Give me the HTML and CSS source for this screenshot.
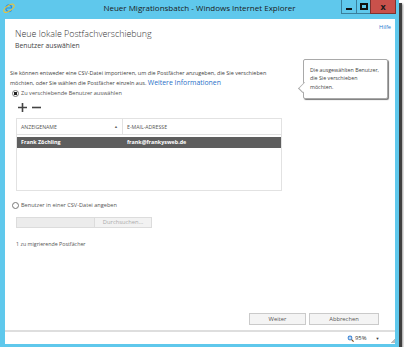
FILE: index.html
```html
<!DOCTYPE html>
<html lang="de">
<head>
    <meta charset="UTF-8">
    <title>Neuer Migrationsbatch</title>
    <link rel="stylesheet" href="styles.css">
</head>
<body>
    <div class="window">
        <div class="titlebar">
            <svg class="ie-logo" width="12" height="12" viewBox="0 0 12 12">
                <path d="M9.2 6.6H3.4c.1 1.5 1.2 2.4 2.6 2.4.9 0 1.6-.4 2.1-1l1 .6C8.3 9.6 7.2 10.2 6 10.2 3.8 10.2 2.2 8.5 2.2 6.3S3.8 2.3 6 2.3s3.3 1.7 3.3 3.8v.5zM3.5 5.5h4.5C7.8 4.3 7 3.5 5.9 3.5S4 4.3 3.5 5.5z" fill="#2b8fe0"/>
                <ellipse cx="6" cy="6.2" rx="6" ry="2.6" transform="rotate(-35 6 6.2)" fill="none" stroke="#f2c12e" stroke-width="1"/>
            </svg>
            <div class="title">Neuer Migrationsbatch - Windows Internet Explorer</div>
            <div class="controls">
                <div class="ctl ctl-min"><span></span></div>
                <div class="ctl ctl-max"><span></span></div>
                <div class="ctl ctl-close">x</div>
            </div>
        </div>
        <div class="client">
            <div class="page">
                <div class="head">
                    <div class="titles">
                        <h1>Neue lokale Postfachverschiebung</h1>
                        <h2>Benutzer auswählen</h2>
                    </div>
                    <a class="help" href="#">Hilfe</a>
                </div>
                <p class="intro">Sie können entweder eine CSV-Datei importieren, um die Postfächer anzugeben, die Sie verschieben<br>möchten, oder Sie wählen die Postfächer einzeln aus. <a href="#">Weitere Informationen</a></p>
                <div class="option"><span class="radio checked"></span>Zu verschiebende Benutzer auswählen</div>
                <div class="tools">
                    <svg width="9" height="9" viewBox="0 0 9 9"><path d="M4.5 0v9M0 4.5h9" stroke="#444" stroke-width="1.6"/></svg>
                    <svg width="9" height="9" viewBox="0 0 9 9"><path d="M0 4.5h9" stroke="#444" stroke-width="1.6"/></svg>
                </div>
                <div class="grid">
                    <div class="grid-head">
                        <div class="cell cell-name">ANZEIGENAME<span class="sort">&#9650;</span></div>
                        <div class="cell">E-MAIL-ADRESSE</div>
                    </div>
                    <div class="grid-body">
                        <div class="grid-row selected">
                            <div class="cell cell-name">Frank Zöchling</div>
                            <div class="cell">frank@frankysweb.de</div>
                        </div>
                    </div>
                </div>
                <div class="option option-csv"><span class="radio"></span>Benutzer in einer CSV-Datei angeben</div>
                <div class="file">
                    <div class="file-input"></div>
                    <div class="file-btn">Durchsuchen...</div>
                </div>
                <p class="count">1 zu migrierende Postfächer</p>
                <div class="actions">
                    <button class="btn btn-next">Weiter</button>
                    <button class="btn btn-cancel">Abbrechen</button>
                </div>
                <div class="callout">Die ausgewählten Benutzer,<br>die Sie verschieben<br>möchten.</div>
            </div>
            <div class="statusbar">
                <svg class="zoom-icon" width="7" height="7" viewBox="0 0 7 7">
                    <circle cx="3" cy="3" r="2.4" fill="#3d86d6"/>
                    <path d="M3 1.6v2.8M1.6 3h2.8" stroke="#fff" stroke-width="0.9"/>
                    <path d="M4.6 4.6L6.6 6.6" stroke="#7a4a1c" stroke-width="1.2"/>
                </svg>
                <span class="zoom-level">95%</span>
                <span class="zoom-arrow">&#9660;</span>
                <span class="grip"></span>
            </div>
        </div>
    </div>
</body>
</html>
```
FILE: styles.css
```css
body {
    margin: 0;
    background-color: #fff;
    font-family: 'Open Sans', 'Noto Sans', sans-serif;
    color: #444;
}
.window {
    display: flex;
    flex-direction: column;
    width: 399px;
    height: 347px;
    background-color: #5fc8ec;
    box-shadow: 3px 3px 0 #3f3f3f, 4px 4px 2px #9a9a9a;
}
.titlebar {
    display: grid;
    grid-template-columns: 1fr auto 1fr;
    align-items: start;
    height: 19px;
}
.ie-logo {
    margin: 2px 0 0 3px;
}
.title {
    font-size: 8px;
    line-height: 16px;
    color: #1b1b1b;
}
.controls {
    display: flex;
    justify-self: end;
    margin-right: 3px;
}
.ctl {
    display: flex;
    align-items: center;
    justify-content: center;
    height: 13px;
    border: 1px solid #3a7f9c;
    border-top: 0;
    box-sizing: content-box;
}
.ctl-min {
    width: 14px;
    border-right: 0;
}
.ctl-min span {
    width: 6px;
    height: 2px;
    margin-top: 4px;
    background-color: #111;
}
.ctl-max {
    width: 13px;
    border-right: 0;
}
.ctl-max span {
    width: 4px;
    height: 3px;
    border: 2px solid #111;
}
.ctl-close {
    width: 24px;
    background-color: #c9514b;
    border-color: #7d3330;
    color: #1a1a1a;
    font-size: 9px;
    font-weight: bold;
    line-height: 13px;
}
.client {
    display: flex;
    flex-direction: column;
    flex: 1;
    margin: 0 4px 3px 5px;
    background-color: #fff;
}
.page {
    position: relative;
    display: flex;
    flex-direction: column;
    flex: 1;
    padding-bottom: 5px;
}
.head {
    display: flex;
    justify-content: space-between;
    align-items: flex-start;
}
.titles {
    padding: 8px 0 0 10px;
}
h1 {
    margin: 0;
    font-size: 8.9px;
    font-weight: 300;
    line-height: 14px;
    color: #333;
}
h2 {
    margin: 0;
    font-size: 6.8px;
    font-weight: normal;
    line-height: 10px;
    color: #444;
}
.help {
    margin: 3px 4px 0 0;
    font-size: 5.6px;
    line-height: 10px;
    color: #1f78cf;
    text-decoration: none;
}
.intro {
    margin: 18px 0 0 5px;
    font-size: 5.5px;
    line-height: 9px;
    color: #444;
}
.intro a {
    font-size: 6.9px;
    color: #1f70c7;
    text-decoration: none;
}
.option {
    display: flex;
    align-items: center;
    margin: 1px 0 0 7px;
    font-size: 5.6px;
    line-height: 9px;
    color: #555;
}
.radio {
    width: 5px;
    height: 5px;
    margin-right: 2px;
    border: 0.8px solid #777;
    border-radius: 50%;
    box-sizing: content-box;
    background-color: #fff;
}
.radio.checked {
    background: radial-gradient(circle, #222 0, #222 1.6px, #fff 2px);
}
.tools {
    display: flex;
    gap: 5px;
    height: 10px;
    align-items: center;
    margin: 4px 0 0 13px;
}
.grid {
    width: 266px;
    height: 73px;
    margin: 6px 0 0 11px;
    box-sizing: border-box;
    border: 1px solid #e2e2e2;
}
.grid-head {
    display: flex;
    height: 16px;
    border-bottom: 1px solid #e2e2e2;
    box-sizing: border-box;
    font-size: 5.2px;
    color: #555;
}
.grid-head .cell {
    display: flex;
    align-items: center;
}
.cell {
    padding-left: 4px;
    flex: 1;
}
.cell-name {
    flex: 0 0 106px;
    box-sizing: border-box;
    padding-right: 4px;
}
.grid-head .cell-name {
    border-right: 1px solid #e2e2e2;
}
.sort {
    margin-left: auto;
    font-size: 4px;
    color: #666;
}
.grid-body {
    padding-top: 2px;
}
.grid-row {
    display: flex;
    height: 11px;
    line-height: 11px;
    font-size: 5.4px;
    font-weight: bold;
}
.grid-row.selected {
    background-color: #5e5e5e;
    color: #fff;
}
.option-csv {
    margin-top: 10px;
}
.file {
    display: flex;
    margin: 7px 0 0 11px;
    height: 11px;
}
.file-input {
    width: 79px;
    background-color: #ececec;
    border: 1px solid #dcdcdc;
    box-sizing: border-box;
}
.file-btn {
    width: 57px;
    background-color: #f2f2f2;
    border: 1px solid #dcdcdc;
    border-left: 0;
    box-sizing: border-box;
    font-size: 5.8px;
    line-height: 9px;
    text-align: center;
    color: #aaa;
}
.count {
    margin: 12px 0 0 11px;
    font-size: 5.3px;
    line-height: 9px;
    color: #555;
}
.actions {
    display: flex;
    justify-content: flex-end;
    gap: 3px;
    margin: auto 16px 0 0;
}
.btn {
    height: 12px;
    padding: 0;
    background-color: #f4f4f4;
    border: 1px solid #cacaca;
    font-family: inherit;
    font-size: 5.8px;
    color: #555;
}
.btn-next {
    width: 57px;
}
.btn-cancel {
    width: 70px;
}
.callout {
    position: absolute;
    top: 40px;
    left: 298px;
    width: 85px;
    height: 40px;
    box-sizing: border-box;
    padding: 6px 0 0 6px;
    background-color: #fff;
    border: 1px solid #a9a9a9;
    border-radius: 2px;
    box-shadow: 1px 1px 1px #777;
    font-size: 5.3px;
    line-height: 8.3px;
    color: #444;
}
.callout::before {
    content: '';
    position: absolute;
    left: -5px;
    top: 23px;
    width: 8px;
    height: 8px;
    background-color: #fff;
    border-left: 1px solid #a9a9a9;
    border-bottom: 1px solid #a9a9a9;
    transform: rotate(45deg) scaleX(0.7);
}
.statusbar {
    display: flex;
    align-items: center;
    height: 12px;
    border-top: 2px solid #dedede;
    font-size: 5.8px;
    color: #333;
}
.zoom-icon {
    margin-left: 342px;
}
.zoom-level {
    margin-left: 1px;
}
.zoom-arrow {
    margin-left: 9px;
    font-size: 4px;
}
.grip {
    width: 4px;
    height: 4px;
    margin: 6px 0 0 auto;
    background: linear-gradient(135deg, transparent 50%, #bbb 50%);
}
```
